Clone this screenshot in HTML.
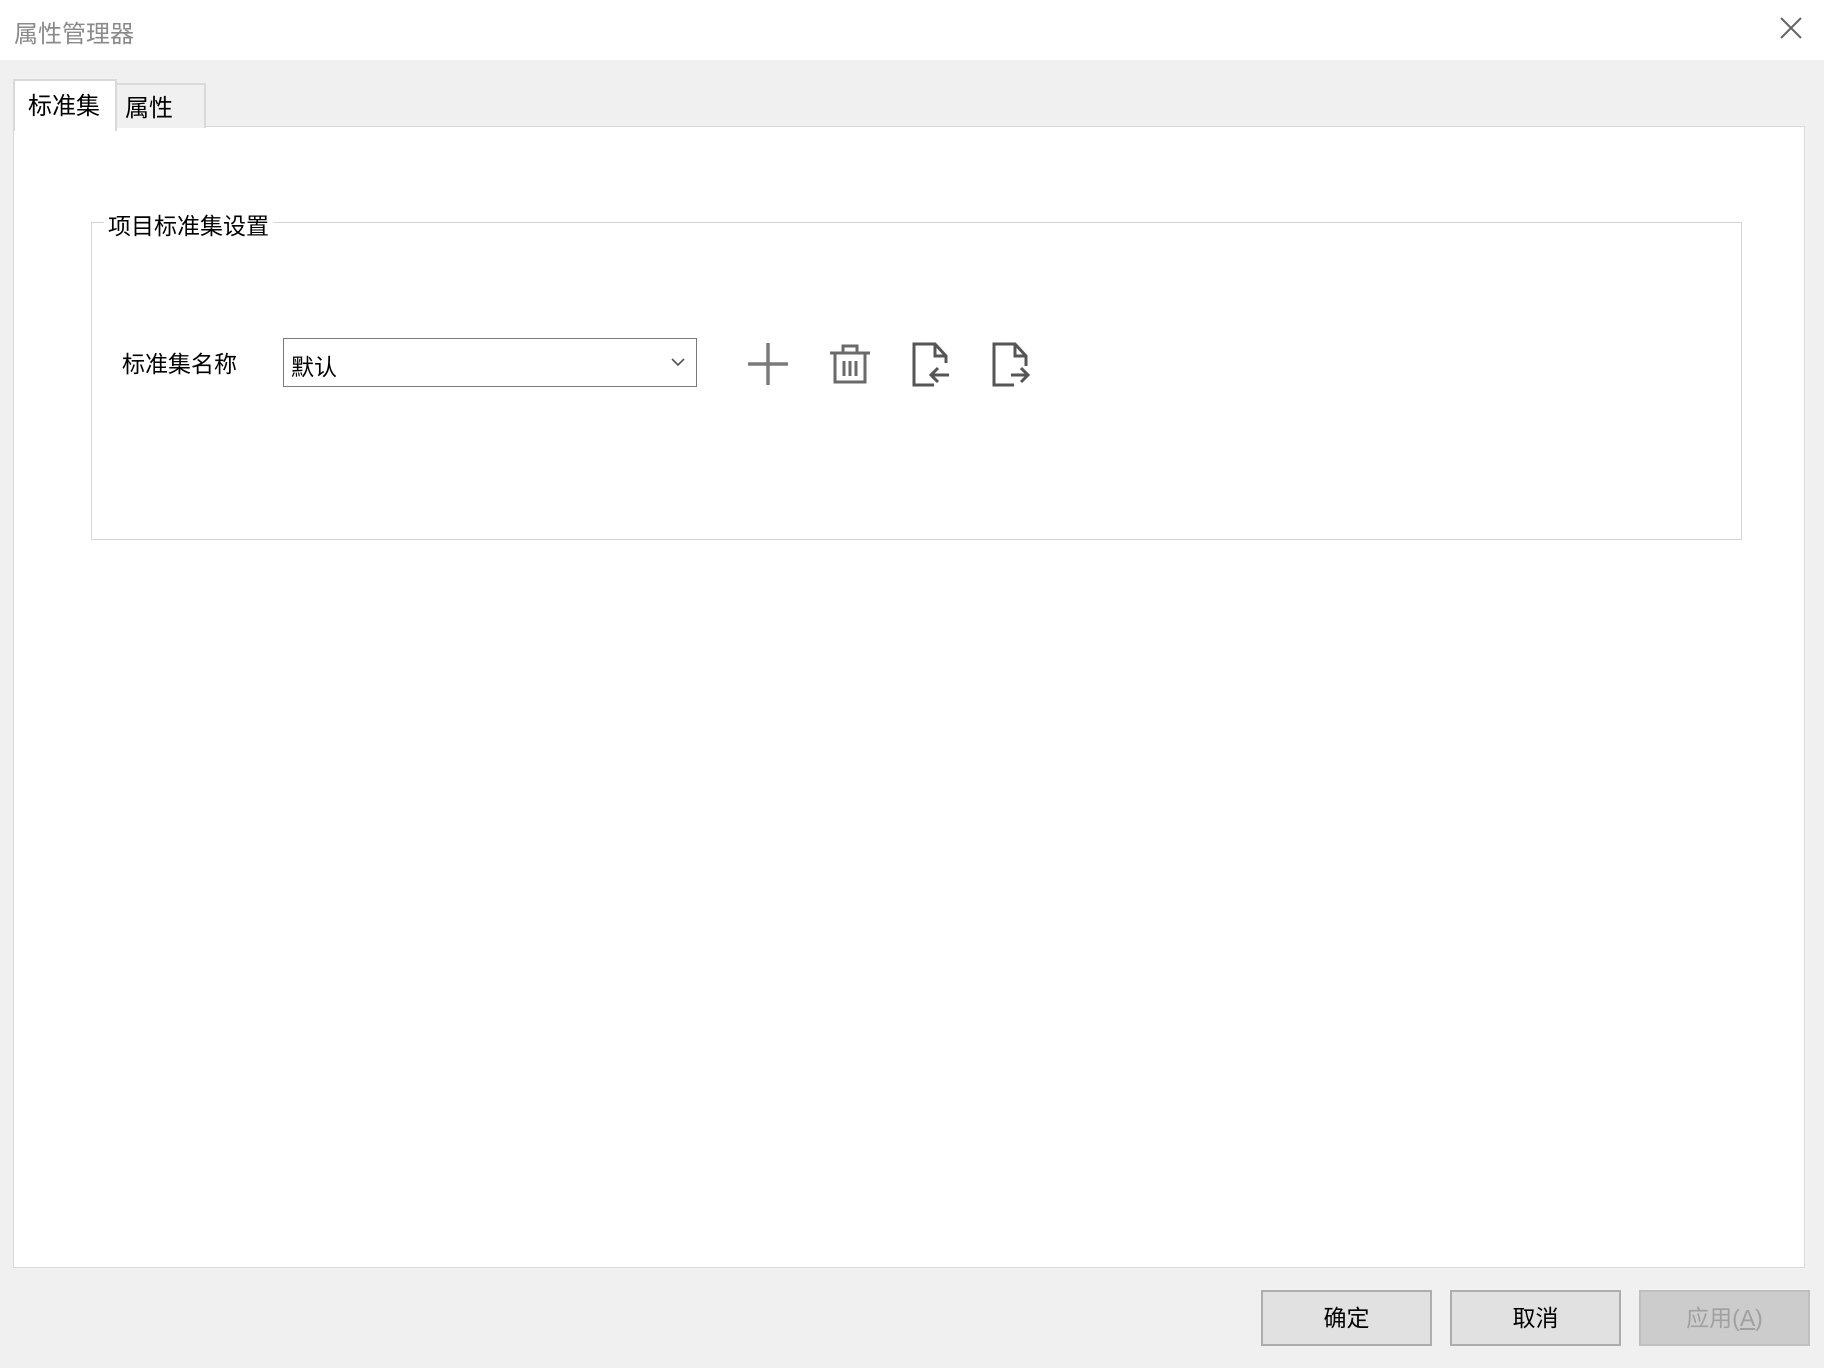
<!DOCTYPE html>
<html><head><meta charset="utf-8"><style>
body{margin:0;width:1824px;height:1368px;background:#f0f0f0;position:relative;overflow:hidden;font-family:"Liberation Sans","Microsoft YaHei","Noto Sans CJK SC",sans-serif;}
.a{position:absolute;}
.title{left:0;top:0;width:1824px;height:60px;background:#fff;}
.btn{position:absolute;top:1290px;width:167px;height:52px;border:2px solid #adadad;background:#e1e1e1;font-size:23px;line-height:52px;text-align:center;color:#000;box-sizing:content-box}
</style></head><body>
<div class="a title"></div>
<div class="a" style="left:14px;top:14px;font-size:24px;color:#8a8a8a">属性管理器</div>
<svg class="a" style="left:1780px;top:17px" width="22" height="22"><path d="M1 1L21 21M21 1L1 21" stroke="#666" stroke-width="2"/></svg>
<div class="a" style="left:13px;top:126px;width:1790px;height:1140px;background:#fff;border:1px solid #d9d9d9"></div>
<div class="a" style="left:114px;top:83px;width:88px;height:43px;border:2px solid #d9d9d9;border-bottom:none;background:#f0f0f0"></div>
<div class="a" style="left:125px;top:88px;font-size:24px">属性</div>
<div class="a" style="left:13px;top:79px;width:100px;height:50px;border:2px solid #d9d9d9;border-bottom:none;background:#fff"></div>
<div class="a" style="left:28px;top:86px;font-size:24px">标准集</div>
<div class="a" style="left:91px;top:222px;width:1649px;height:316px;border:1px solid #d5d5d5"></div>
<div class="a" style="left:104px;top:207px;padding:0 4px;background:#fff;font-size:23px">项目标准集设置</div>
<div class="a" style="left:122px;top:345px;font-size:23px">标准集名称</div>
<div class="a" style="left:283px;top:338px;width:412px;height:47px;border:1px solid #7a7a7a;background:#fff"></div>
<div class="a" style="left:291px;top:348px;font-size:23px">默认</div>
<svg class="a" style="left:670px;top:356px" width="16" height="12"><path d="M2 3L8 9L14 3" stroke="#555" stroke-width="1.6" fill="none"/></svg>
<svg class="a" style="left:740px;top:335px" width="340" height="60">
<path d="M8 29H48M28 8V50" stroke="#7a7a7a" stroke-width="3.5" fill="none"/>
<g stroke="#6a6a6a" stroke-width="3" fill="none"><path d="M90 18H130M103 18V11H117V18M95 18V47H125V18"/><path d="M104 26V41M110 26V41M116 26V41" stroke-width="3"/></g>
<g transform="translate(20 0)" stroke="#555" stroke-width="3" fill="none"><path d="M174 50H154V9H175L186 21V28M175 9V21H186"/><path d="M189 40H171M178 33L171 40L178 47"/></g>
<g transform="translate(20 0)" stroke="#555" stroke-width="3" fill="none"><path d="M254 50H234V9H255L266 21V31M255 9V21H266"/><path d="M251 40H267M261 33L268 40L261 47"/></g>
</svg>
<div class="btn" style="left:1261px">确定</div>
<div class="btn" style="left:1450px">取消</div>
<div class="btn" style="left:1639px;background:#cccccc;border-color:#bfbfbf;color:#a0a0a0">应用(<u>A</u>)</div>
</body></html>
